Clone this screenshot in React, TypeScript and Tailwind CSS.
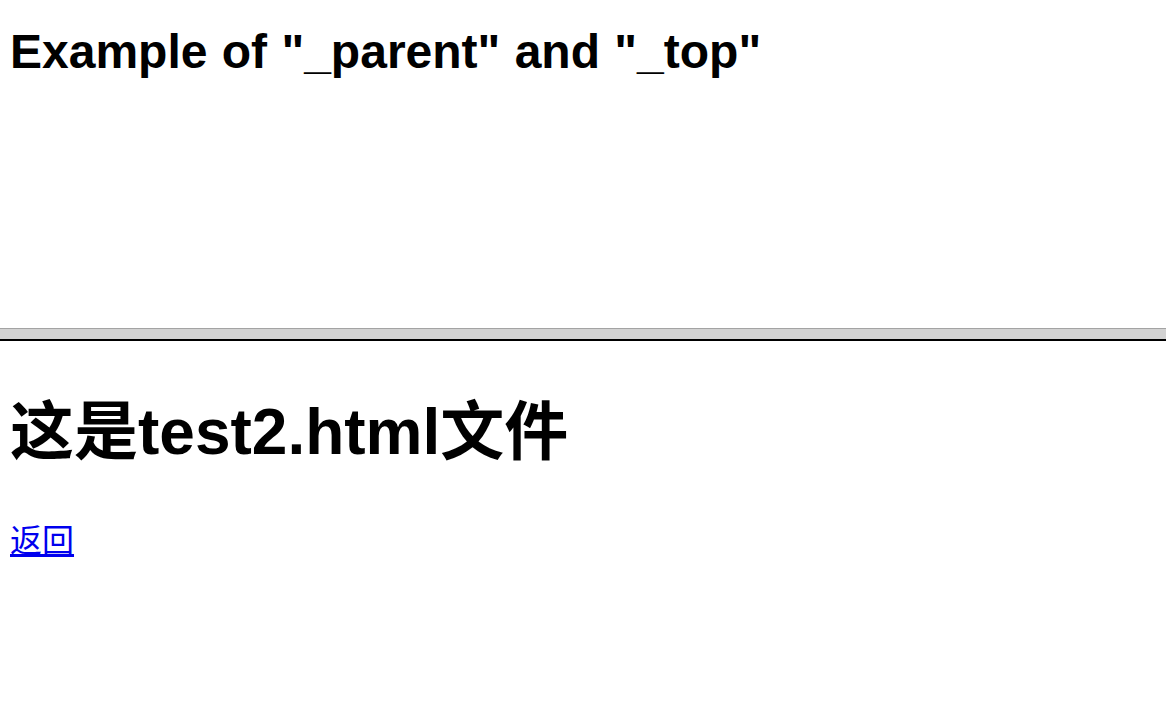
export default function App() {
  return (
    <div className="w-[1166px] h-[710px] bg-white flex flex-col overflow-hidden text-black" style={{ fontFamily: '"Liberation Sans", "Noto Sans CJK SC", Arial, sans-serif' }}>
      <div className="h-[328px] shrink-0 px-[10px] pt-[24px]">
        <h2 className="text-[48px] leading-[56px] font-bold m-0 [word-spacing:1px]">Example of "_parent" and "_top"</h2>
      </div>
      <div className="h-[13px] shrink-0 border-t border-t-[#a3a3a3] bg-[#d2d2d2] border-b-2 border-b-black" />
      <div className="flex-1 px-[10px] pt-[53px]">
        <h1 className="text-[64px] leading-[76px] font-bold m-0">这是test2.html文件</h1>
        <p className="mt-[51px] text-[32px] leading-[40px]">
          <a href="#" className="text-[#0000ee] underline">返回</a>
        </p>
      </div>
    </div>
  );
}
